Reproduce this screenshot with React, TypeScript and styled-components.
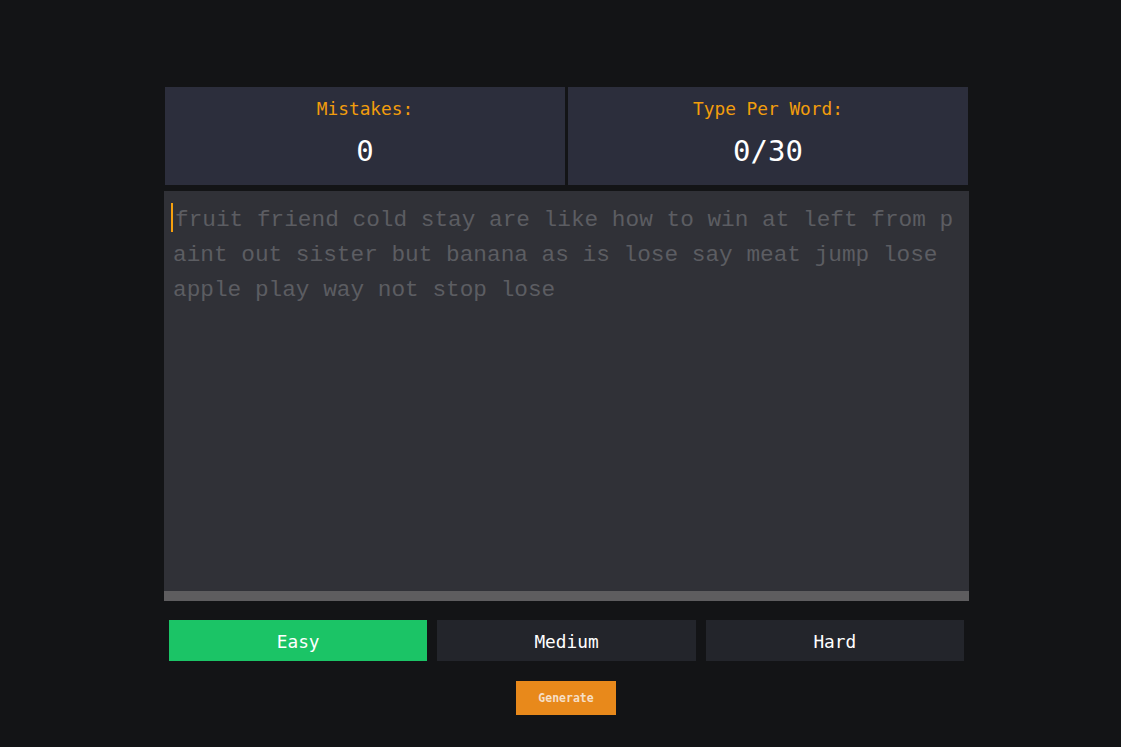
import React from "react";
import styled, { createGlobalStyle } from "styled-components";

const GlobalStyle = createGlobalStyle`
  html, body {
    margin: 0;
    padding: 0;
    background: #131416;
  }
  * {
    box-sizing: border-box;
  }
`;

const uiFont = `"DejaVu Sans Mono", "Liberation Mono", monospace`;

const Page = styled.div`
  min-height: 100vh;
  background: #131416;
  padding-top: 87px;
`;

const Game = styled.div`
  width: 805px;
  margin-left: 164px;
  display: flex;
  flex-direction: column;
`;

const StatsRow = styled.div`
  display: grid;
  grid-template-columns: 1fr 1fr;
  gap: 3px;
  margin: 0 1px;
`;

const StatCard = styled.div`
  height: 98px;
  background: #2c2e3c;
  display: flex;
  flex-direction: column;
  align-items: center;
  padding-top: 10px;
  font-family: ${uiFont};
`;

const StatLabel = styled.span`
  color: #f29d0c;
  font-size: 17.8px;
  line-height: 24px;
`;

const StatValue = styled.span`
  color: #ffffff;
  font-size: 29px;
  line-height: 40px;
  margin-top: 10px;
`;

const TextBox = styled.div`
  margin-top: 6px;
  height: 400px;
  background: #303137;
  padding: 12px 12px 0 9px;
  font-family: "Liberation Mono", "Courier New", monospace;
  font-size: 22.75px;
  line-height: 35px;
  color: #5c5d62;
  word-break: break-all;
  white-space: pre-wrap;
`;

const Caret = styled.span`
  display: inline-block;
  width: 2px;
  height: 29px;
  margin: 0 2px 0 -2px;
  vertical-align: top;
  background: #f5a00e;
`;

const Track = styled.div`
  height: 10px;
  background: #5e5d5f;
`;

const LevelRow = styled.div`
  display: grid;
  grid-template-columns: repeat(3, 1fr);
  gap: 10px;
  padding: 0 5px;
  margin-top: 19px;
`;

const LevelButton = styled.button<{ $active?: boolean }>`
  height: 41px;
  border: none;
  padding-top: 2px;
  background: ${(p) => (p.$active ? "#1bc466" : "#23252b")};
  color: #ffffff;
  font-family: ${uiFont};
  font-size: 17.8px;
  cursor: pointer;
`;

const GenerateButton = styled.button`
  align-self: center;
  margin: 20px 1px 0 0;
  width: 100px;
  height: 34px;
  border: none;
  background: #e8891b;
  color: #f6dfc6;
  font-family: ${uiFont};
  font-weight: bold;
  font-size: 11.5px;
  cursor: pointer;
`;

const text =
  "fruit friend cold stay are like how to win at left from paint out sister but banana as is lose say meat jump lose apple play way not stop lose";

export default function App() {
  const levels = ["Easy", "Medium", "Hard"];
  return (
    <Page>
      <GlobalStyle />
      <Game>
        <StatsRow>
          <StatCard>
            <StatLabel>Mistakes:</StatLabel>
            <StatValue>0</StatValue>
          </StatCard>
          <StatCard>
            <StatLabel>Type Per Word:</StatLabel>
            <StatValue>0/30</StatValue>
          </StatCard>
        </StatsRow>
        <TextBox>
          <Caret />
          {text}
        </TextBox>
        <Track />
        <LevelRow>
          {levels.map((l, i) => (
            <LevelButton key={l} $active={i === 0}>
              {l}
            </LevelButton>
          ))}
        </LevelRow>
        <GenerateButton>Generate</GenerateButton>
      </Game>
    </Page>
  );
}
